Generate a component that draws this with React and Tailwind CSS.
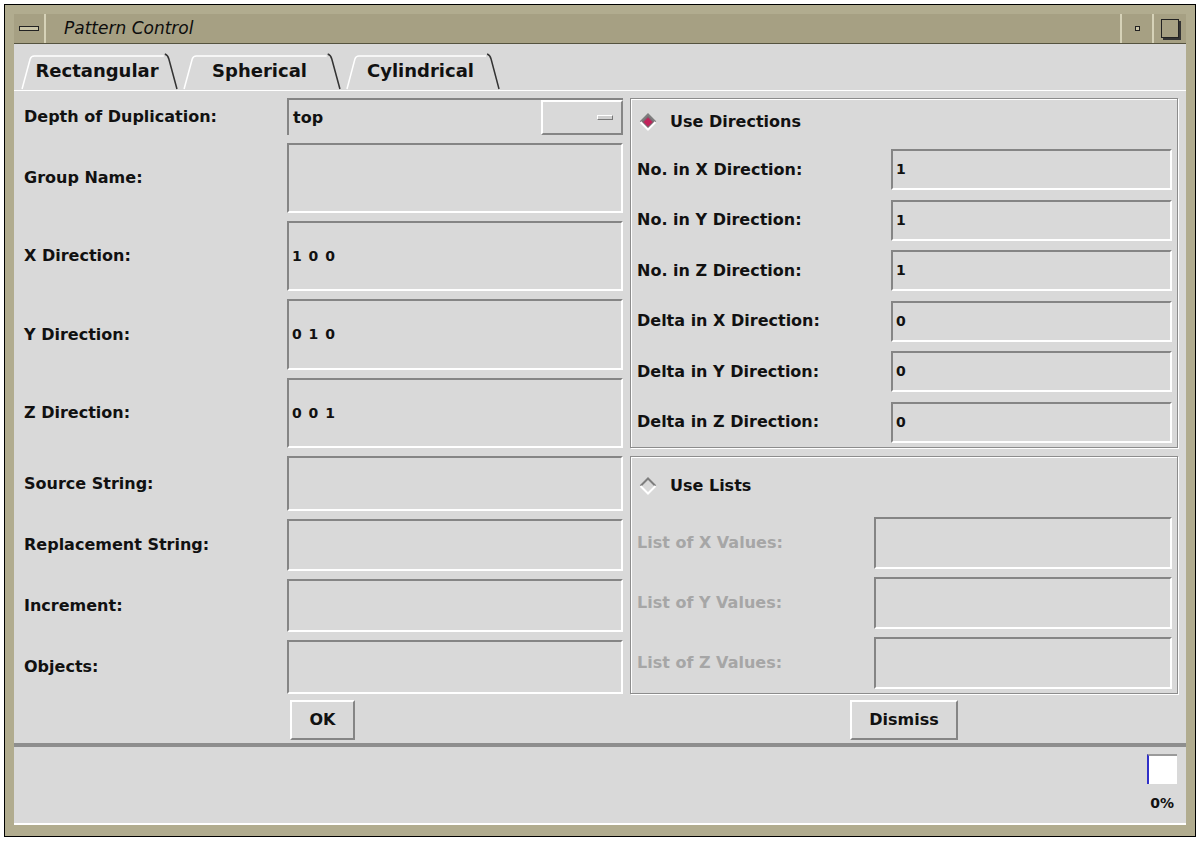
import React from "react";

const sunken =
  "border-2 border-t-[#858585] border-l-[#858585] border-b-white border-r-white";
const raised =
  "border-2 border-t-white border-l-white border-b-[#858585] border-r-[#858585]";

function Diamond({ on }) {
  return (
    <svg width="18" height="18" viewBox="0 0 18 18">
      <polygon points="9,1 17,9 9,17 1,9" fill={on ? "#7a6870" : "#d9d9d9"} />
      <polyline points="1.5,9 9,1.5 16.5,9" stroke="#7d7d7d" strokeWidth="2" fill="none" />
      <polyline points="1.5,9 9,16.5 16.5,9" stroke="#ffffff" strokeWidth="2" fill="none" />
      {on && <polygon points="9,4.5 13.5,9 9,13.5 4.5,9" fill="#c2225a" />}
    </svg>
  );
}

function Tab({ label, width }) {
  return (
    <div className={`relative flex h-[39px] items-center justify-center pr-[4px] ${width}`}>
      <svg className="absolute inset-0 h-full w-full" preserveAspectRatio="none" viewBox="0 0 160 39">
        <path d="M4 38 L12 8 Q13 5 16 5 L144 5" stroke="#ffffff" strokeWidth="1.5" fill="none" />
        <path d="M145 3 Q148 4 149 8 L157 38" stroke="#333333" strokeWidth="1.5" fill="none" />
      </svg>
      <span className="relative text-[18px] font-bold text-[#111]">{label}</span>
    </div>
  );
}

function LeftRow({ label, h, value, children }) {
  return (
    <div className={`flex items-center ${h}`}>
      <div className="w-[263px] text-[16px] font-bold text-[#111]">{label}</div>
      {children || (
        <div className={`flex h-full w-[336px] items-center pl-[3px] ${sunken}`}>
          <span className="text-[14px] font-bold tracking-[1px] text-[#111]">{value}</span>
        </div>
      )}
    </div>
  );
}

function RightRow({ label, value, dim, fieldW, h }) {
  return (
    <div className={`flex items-center justify-between ${h}`}>
      <span className={`text-[16px] font-bold ${dim ? "text-[#a6a6a6]" : "text-[#111]"}`}>{label}</span>
      <div className={`flex h-full items-center pl-[3px] ${fieldW} ${sunken}`}>
        <span className="text-[14px] font-bold text-[#111]">{value}</span>
      </div>
    </div>
  );
}

export default function App() {
  return (
    <div className="h-[841px] w-[1202px] bg-white p-[4px] font-['DejaVu_Sans',sans-serif]">
      <div className="flex h-[833px] w-[1192px] flex-col border border-black bg-[#b1ac8f] pb-[11px] pl-[9px] pr-[9px] pt-[9px]">
        {/* title bar */}
        <div className="flex h-[30px] items-center border-b border-[#55533f] bg-[#a6a083]">
          <div className="flex h-full w-[32px] items-center justify-center border-r-2 border-[#d6d2b8]">
            <div className="h-[5px] w-[20px] border border-[#222] bg-[#c9c4a7]" />
          </div>
          <span className="ml-[18px] text-[17px] italic text-[#0d0d0d]">Pattern Control</span>
          <div className="flex-1" />
          <div className="flex h-full w-[32px] items-center justify-center border-l-2 border-[#d6d2b8]">
            <div className="h-[5px] w-[5px] border border-[#222] bg-[#c9c4a7]" />
          </div>
          <div className="flex h-full w-[34px] items-center justify-center border-l-2 border-[#d6d2b8]">
            <div className="h-[19px] w-[18px] border border-[#222] shadow-[2px_2px_0_#333]" />
          </div>
        </div>

        {/* content */}
        <div className="flex flex-1 flex-col bg-[#d9d9d9]">
          <div className="flex h-[46px] items-end pl-[4px]">
            <Tab label="Rectangular" width="w-[162px]" />
            <Tab label="Spherical" width="w-[163px]" />
            <Tab label="Cylindrical" width="w-[159px]" />
          </div>

          <div className="flex h-[653px] border-t border-white pt-[7px]">
            {/* left column */}
            <div className="flex w-[609px] flex-col pl-[10px]">
              <div className="flex flex-col gap-[8px]">
                <LeftRow label="Depth of Duplication:" h="h-[37px]">
                  <div className="flex h-full w-[336px] items-center border-t-2 border-l-2 border-[#858585]">
                    <span className="ml-[4px] flex-1 text-[16px] font-bold text-[#111]">top</span>
                    <div className={`flex h-full w-[82px] items-center justify-end pr-[8px] ${raised}`}>
                      <div className="h-[5px] w-[16px] border border-t-white border-l-white border-b-[#777] border-r-[#777] bg-[#cfcfcf]" />
                    </div>
                  </div>
                </LeftRow>
                <LeftRow label="Group Name:" h="h-[70px]" value="" />
                <LeftRow label="X Direction:" h="h-[70px]" value="1 0 0" />
                <LeftRow label="Y Direction:" h="h-[71px]" value="0 1 0" />
                <LeftRow label="Z Direction:" h="h-[70px]" value="0 0 1" />
                <LeftRow label="Source String:" h="h-[55px]" value="" />
                <LeftRow label="Replacement String:" h="h-[52px]" value="" />
                <LeftRow label="Increment:" h="h-[53px]" value="" />
                <LeftRow label="Objects:" h="h-[54px]" value="" />
              </div>
              <div className="ml-[266px] mt-[6px] flex">
                <button className={`h-[40px] w-[65px] bg-[#d9d9d9] text-[16px] font-bold text-[#111] ${raised}`}>OK</button>
              </div>
            </div>

            {/* right column */}
            <div className="ml-[7px] flex w-[548px] flex-col">
              <div className="flex h-[350px] flex-col border border-[#8c8c8c] pl-[6px] pr-[5px] shadow-[inset_1px_1px_0_#fff,1px_1px_0_#fff]">
                <div className="mt-[13px] flex h-[20px] items-center gap-[13px] pl-[2px]">
                  <Diamond on />
                  <span className="text-[16px] font-bold text-[#111]">Use Directions</span>
                </div>
                <div className="mt-[17px] flex flex-col gap-[9.5px]">
                  <RightRow label="No. in X Direction:" value="1" fieldW="w-[281px]" h="h-[41px]" />
                  <RightRow label="No. in Y Direction:" value="1" fieldW="w-[281px]" h="h-[41px]" />
                  <RightRow label="No. in Z Direction:" value="1" fieldW="w-[281px]" h="h-[41px]" />
                  <RightRow label="Delta in X Direction:" value="0" fieldW="w-[281px]" h="h-[41px]" />
                  <RightRow label="Delta in Y Direction:" value="0" fieldW="w-[281px]" h="h-[41px]" />
                  <RightRow label="Delta in Z Direction:" value="0" fieldW="w-[281px]" h="h-[41px]" />
                </div>
              </div>
              <div className="mt-[8px] flex h-[238px] flex-col border border-[#8c8c8c] pl-[6px] pr-[5px] shadow-[inset_1px_1px_0_#fff,1px_1px_0_#fff]">
                <div className="mt-[19px] flex h-[20px] items-center gap-[13px] pl-[2px]">
                  <Diamond />
                  <span className="text-[16px] font-bold text-[#111]">Use Lists</span>
                </div>
                <div className="mt-[21px] flex flex-col gap-[8px]">
                  <RightRow label="List of X Values:" value="" dim fieldW="w-[298px]" h="h-[52px]" />
                  <RightRow label="List of Y Values:" value="" dim fieldW="w-[298px]" h="h-[52px]" />
                  <RightRow label="List of Z Values:" value="" dim fieldW="w-[298px]" h="h-[52px]" />
                </div>
              </div>
              <div className="mt-[6px] flex justify-center">
                <button className={`h-[40px] w-[108px] bg-[#d9d9d9] text-[16px] font-bold text-[#111] ${raised}`}>Dismiss</button>
              </div>
            </div>
          </div>

          <div className="h-[4px] bg-[#8e8e8e]" />

          {/* status area */}
          <div className="flex h-[76px] flex-col items-end pr-[9px] pt-[7px]">
            <div className="h-[30px] w-[30px] border-t-2 border-l-2 border-t-[#9a9a9a] border-l-[#3030c8] bg-white" />
            <span className="mr-[3px] mt-[9px] text-[14px] font-bold text-[#111]">0%</span>
          </div>
          <div className="h-[2px] bg-white" />
        </div>
      </div>
    </div>
  );
}
